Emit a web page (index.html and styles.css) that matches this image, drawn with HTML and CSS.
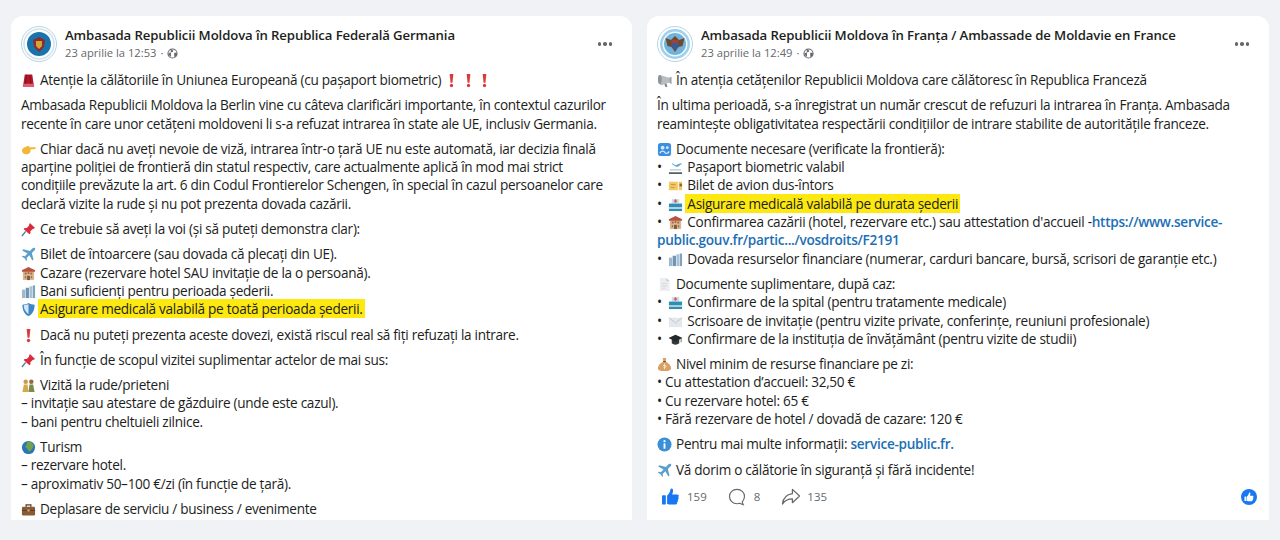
FILE: index.html
```html
<!DOCTYPE html>
<html lang="ro">
<head>
<meta charset="utf-8">
<title>Ambasade</title>
<link rel="stylesheet" href="styles.css">
</head>
<body>
<svg class="defs" aria-hidden="true">
  <symbol id="e-siren" viewBox="0 0 16 16"><path d="M4 1.500h8l1.500 10.500h-11z" fill="#b3162a"/><rect x="2" y="11.500" width="12" height="3.500" rx="1" fill="#d9606c"/><path d="M6 2 5 11.500M9.500 2l.8 9.500" stroke="#7c0c1b" stroke-width=".8"/></symbol>
  <symbol id="e-excl" viewBox="0 0 16 16"><path d="M6 1h4L9 10.500H7z" fill="#dd3a3a"/><circle cx="8" cy="13.300" r="1.800" fill="#dd3a3a"/></symbol>
  <symbol id="e-hand" viewBox="0 0 16 16"><path d="M1 9c0-2 2-3 4-4l3-1c1 0 1 1 .5 1.500L15 5.500c1.200.2 1.200 1.800 0 2L10 8l.3 1.500c0 1-.5 1.300-1 2-.8 1.500-2.500 1.500-4 1.500C3 13 1 11.500 1 9z" fill="#f2b736"/></symbol>
  <symbol id="e-pin" viewBox="0 0 16 16"><path d="M9.500 1 15 6.500l-1.600.8-1 .1-2.400 2.400.1 2.200-1.100 1.100L2.800 7.400 3.900 6.300l2.200.1 2.400-2.400.1-1z" fill="#d92b3a"/><path d="M5 10 1 15" stroke="#5a7d94" stroke-width="1.500"/></symbol>
  <symbol id="e-plane" viewBox="0 0 16 16"><path d="M15 1c-1.300-.4-2.500.2-3.500 1.200L9.500 4.200 2.500 2.500 1.300 3.700l5.600 3.200-2.700 2.900-2.300-.4-.9.900 2.900 1.600 1.600 2.900.9-.9-.4-2.300 2.900-2.700 3.200 5.600 1.200-1.200-1.700-7 2-2C14.800 3.500 15.400 2.300 15 1z" fill="#5c9fc9"/></symbol>
  <symbol id="e-hotel" viewBox="0 0 16 16"><rect x="2" y="4" width="12" height="11" fill="#dcb78e"/><path d="M1 4.500 8 1l7 3.500v1.500H1z" fill="#b9513f"/><rect x="6.500" y="10.500" width="3" height="4.500" fill="#7a5a3c"/><path d="M4 7h2v2H4zM10 7h2v2h-2zM4 11h1.500v2H4zM10.500 11H12v2h-1.500z" fill="#8d6f52"/><circle cx="8" cy="7.500" r="1.100" fill="#c94b4b"/></symbol>
  <symbol id="e-bank" viewBox="0 0 16 16"><path d="M1 6h3.500v9H1z" fill="#9db9cf"/><path d="M5 4h3.500v11H5z" fill="#6f94b3"/><path d="M9 2.500h3v12.500H9z" fill="#a9c2d6"/><path d="M12.500 1.500H15V15h-2.500z" fill="#7fa3bf"/></symbol>
  <symbol id="e-shield" viewBox="0 0 16 16"><path d="M8 1c2 1.200 4 1.600 6.500 1.800C14.500 9 12 13 8 15 4 13 1.500 9 1.500 2.800 4 2.600 6 2.200 8 1z" fill="#3f86c6"/><path d="M8 2.500 3 3.500C3 8 5 11 8 13z" fill="#d6e6f3"/></symbol>
  <symbol id="e-people" viewBox="0 0 16 16"><circle cx="5" cy="4" r="2.400" fill="#c99a4a"/><circle cx="11" cy="4" r="2.400" fill="#9a6b34"/><path d="M1.500 15l1.500-8h4l1 8z" fill="#d3a84f"/><path d="M8 15l1-8h4l1.500 8z" fill="#7d8a4a"/></symbol>
  <symbol id="e-globe" viewBox="0 0 16 16"><circle cx="8" cy="8" r="7" fill="#2b74b8"/><path d="M7 2c2-1 5 0 6 3 1 2 0 3-1 4-1 2-3 4-4 3-1-2-1-3-3-4-1-2 1-2 1-3s0-2 1-3z" fill="#6fa24a"/></symbol>
  <symbol id="e-case" viewBox="0 0 16 16"><path d="M5.500 5V3h5v2" fill="none" stroke="#5e3b22" stroke-width="1.400"/><rect x="1" y="5" width="14" height="9.500" rx="1.500" fill="#8a5a33"/><path d="M1 9h14" stroke="#5e3b22"/><rect x="6.800" y="8" width="2.400" height="2" fill="#d2b184"/></symbol>
  <symbol id="e-mega" viewBox="0 0 16 16"><path d="M1 5c0-1 1-3 2-3l10 3v5L5 13c-3 0-4-5-4-8z" fill="#b9bdc0"/><ellipse cx="3" cy="7" rx="2" ry="4.800" fill="#8f9498"/><path d="M13 5l2.500-1v8L13 10z" fill="#9aa0a4"/><path d="M8 12l1 3h2l-1-4z" fill="#7a7f83"/></symbol>
  <symbol id="e-control" viewBox="0 0 16 16"><rect x="1" y="1" width="14" height="14" rx="3" fill="#3b8fe0"/><circle cx="6" cy="6" r="2" fill="#d8eafa"/><circle cx="11" cy="6" r="1.500" fill="#d8eafa"/><path d="M3 12c1-3 5-3 6 0M8 11c2 2 4 1 5-1" stroke="#d8eafa" stroke-width="1.300" fill="none"/></symbol>
  <symbol id="e-depart" viewBox="0 0 16 16"><path d="M1 13h14v2H1z" fill="#53606b"/><path d="M2 10.500h12" stroke="#a9b3ba" stroke-width="1"/><path d="M4 3l4 2.500 5-2 2 .5-4 3-2 .5L5 5z" fill="#6aa9d4"/></symbol>
  <symbol id="e-ticket" viewBox="0 0 16 16"><rect x="1" y="4" width="14" height="9" fill="#f1c865"/><rect x="10.500" y="4" width="1" height="9" fill="#fff"/><path d="M3 7h5M3 10h4" stroke="#c7933a"/><rect x="12.300" y="6" width="2.700" height="3" fill="#8f6a25"/></symbol>
  <symbol id="e-hosp" viewBox="0 0 16 16"><path d="M4 2h8v5H4z" fill="#cfdfe9"/><path d="M7.300 2.500h1.400v3.500H7.300zM6.200 3.600h3.600V5H6.200z" fill="#d65757"/><rect x="1" y="7" width="14" height="8" fill="#2f8fb3"/><path d="M1 11h14v1.500H1z" fill="#dfeaf0"/></symbol>
  <symbol id="e-page" viewBox="0 0 16 16"><path d="M3 1h7l3.500 3.500V15H3z" fill="#eceef0"/><path d="M10 1v3.500h3.500z" fill="#c8ccd0"/><path d="M5 7h6M5 9.500h6M5 12h4" stroke="#d5d8db"/></symbol>
  <symbol id="e-mail" viewBox="0 0 16 16"><rect x="1" y="4" width="14" height="10" fill="#e4e8ec"/><path d="M1 4l7 5.500L15 4" fill="none" stroke="#bfc6cc"/></symbol>
  <symbol id="e-cap" viewBox="0 0 16 16"><path d="M4 8v4c2 2 6 2 8 0V8z" fill="#33383c"/><path d="M8 3 .5 6.500 8 10l7.500-3.500z" fill="#24282b"/><path d="M14 7v4" stroke="#6a6f73"/></symbol>
  <symbol id="e-bag" viewBox="0 0 16 16"><path d="M6 1h4L9 5c3 1 6 4 6 7 0 2-2 3-7 3s-7-1-7-3c0-3 3-6 6-7z" fill="#d9a066"/><path d="M6.500 4.800h3" stroke="#7c4f25" stroke-width="1.200"/><path d="M8 7v6M6.500 9h2.500c1 0 1 2 0 2H7" stroke="#f7e3c6" fill="none"/></symbol>
  <symbol id="e-info" viewBox="0 0 16 16"><circle cx="8" cy="8" r="7.500" fill="#3b8fd6"/><circle cx="8" cy="4.500" r="1.200" fill="#fff"/><rect x="7" y="6.800" width="2" height="5.700" fill="#fff"/></symbol>
  <symbol id="i-world" viewBox="0 0 12 12"><circle cx="6" cy="6" r="5" fill="#fff" stroke="#65686c" stroke-width="1.100"/><path d="M4 1.200c1 1 2.500.8 2.800 1.900S5 4.800 3.800 5 1.200 5.400 1.600 7 3.800 8 4.500 10.600zM7.800 5.300c1.500-.5 3.200 0 3.300 1S9.300 9.500 8 10.300z" fill="#65686c"/></symbol>
</svg>

<main class="page">
  <article class="card">
    <header class="head">
      <svg class="avatar" viewBox="0 0 36 36" aria-hidden="true"><circle cx="18" cy="18" r="17.500" fill="#fff" stroke="#b5d3e4"/><circle cx="18" cy="18" r="15" fill="none" stroke="#cfe3ef" stroke-width="1.500"/><circle cx="18" cy="18" r="12" fill="#1a74ac"/><path d="M12 14l6-3 6 3-1 7-5 5-5-5z" fill="#8a2c33"/><path d="M15 15h6v5l-3 3-3-3z" fill="#d6a52f"/></svg>
      <div class="meta">
        <div class="name">Ambasada Republicii Moldova în Republica Federală Germania</div>
        <div class="date"><span>23 aprilie la 12:53</span><span>·</span><svg class="world" aria-hidden="true"><use href="#i-world"/></svg></div>
      </div>
      <div class="dots"><i></i><i></i><i></i></div>
    </header>
    <div class="body">
      <p><svg class="emoji"><use href="#e-siren"/></svg>Atenție la călătoriile în Uniunea Europeană (cu pașaport biometric) <svg class="emoji excl"><use href="#e-excl"/></svg><svg class="emoji excl"><use href="#e-excl"/></svg><svg class="emoji excl"><use href="#e-excl"/></svg></p>
      <p>Ambasada Republicii Moldova la Berlin vine cu câteva clarificări importante, în contextul cazurilor<br>recente în care unor cetățeni moldoveni li s-a refuzat intrarea în state ale UE, inclusiv Germania.</p>
      <p><svg class="emoji"><use href="#e-hand"/></svg>Chiar dacă nu aveți nevoie de viză, intrarea într-o țară UE nu este automată, iar decizia finală<br>aparține poliției de frontieră din statul respectiv, care actualmente aplică în mod mai strict<br>condițiile prevăzute la art. 6 din Codul Frontierelor Schengen, în special în cazul persoanelor care<br>declară vizite la rude și nu pot prezenta dovada cazării.</p>
      <p><svg class="emoji"><use href="#e-pin"/></svg>Ce trebuie să aveți la voi (și să puteți demonstra clar):</p>
      <p><svg class="emoji"><use href="#e-plane"/></svg>Bilet de întoarcere (sau dovada că plecați din UE).<br><svg class="emoji"><use href="#e-hotel"/></svg>Cazare (rezervare hotel SAU invitație de la o persoană).<br><svg class="emoji"><use href="#e-bank"/></svg>Bani suficienți pentru perioada șederii.<br><svg class="emoji"><use href="#e-shield"/></svg><mark>Asigurare medicală valabilă pe toată perioada șederii.</mark></p>
      <p><svg class="emoji"><use href="#e-excl"/></svg>Dacă nu puteți prezenta aceste dovezi, există riscul real să fiți refuzați la intrare.</p>
      <p><svg class="emoji"><use href="#e-pin"/></svg>În funcție de scopul vizitei suplimentar actelor de mai sus:</p>
      <p><svg class="emoji"><use href="#e-people"/></svg>Vizită la rude/prieteni<br>– invitație sau atestare de găzduire (unde este cazul).<br>– bani pentru cheltuieli zilnice.</p>
      <p><svg class="emoji"><use href="#e-globe"/></svg>Turism<br>– rezervare hotel.<br>– aproximativ 50–100 €/zi (în funcție de țară).</p>
      <p><svg class="emoji"><use href="#e-case"/></svg>Deplasare de serviciu / business / evenimente</p>
    </div>
  </article>

  <article class="card">
    <header class="head">
      <svg class="avatar" viewBox="0 0 36 36" aria-hidden="true"><circle cx="18" cy="18" r="17.500" fill="#fff" stroke="#b5d3e4"/><circle cx="18" cy="18" r="15" fill="#9fd0ea"/><circle cx="18" cy="18" r="12.500" fill="#f4f8fb"/><circle cx="18" cy="18" r="11" fill="#6fb4dc"/><path d="M8.500 12 14 14l4-4 4 4 5.500-2-2 8-4 1-3.500 5-3.500-5-4-1z" fill="#6c4a2c"/><path d="M14.500 14h7v6l-3.500 4-3.500-4z" fill="#b13a36"/><path d="M14.500 17h7v3l-3.500 4-3.500-4z" fill="#2f5f9c"/></svg>
      <div class="meta">
        <div class="name">Ambasada Republicii Moldova în Franţa / Ambassade de Moldavie en France</div>
        <div class="date"><span>23 aprilie la 12:49</span><span>·</span><svg class="world" aria-hidden="true"><use href="#i-world"/></svg></div>
      </div>
      <div class="dots"><i></i><i></i><i></i></div>
    </header>
    <div class="body">
      <p><svg class="emoji"><use href="#e-mega"/></svg>În atenția cetățenilor Republicii Moldova care călătoresc în Republica Franceză</p>
      <p>În ultima perioadă, s-a înregistrat un număr crescut de refuzuri la intrarea în Franța. Ambasada<br>reamintește obligativitatea respectării condițiilor de intrare stabilite de autoritățile franceze.</p>
      <p><svg class="emoji"><use href="#e-control"/></svg>Documente necesare (verificate la frontieră):<br><span class="bul">•</span><svg class="emoji"><use href="#e-depart"/></svg>Pașaport biometric valabil<br><span class="bul">•</span><svg class="emoji"><use href="#e-ticket"/></svg>Bilet de avion dus-întors<br><span class="bul">•</span><svg class="emoji"><use href="#e-hosp"/></svg><mark>Asigurare medicală valabilă pe durata șederii</mark><br><span class="bul">•</span><svg class="emoji"><use href="#e-hotel"/></svg>Confirmarea cazării (hotel, rezervare etc.) sau attestation d'accueil -<a href="#">https://www.service-<br>public.gouv.fr/partic.../vosdroits/F2191</a><br><span class="bul">•</span><svg class="emoji"><use href="#e-bank"/></svg>Dovada resurselor financiare (numerar, carduri bancare, bursă, scrisori de garanție etc.)</p>
      <p><svg class="emoji"><use href="#e-page"/></svg>Documente suplimentare, după caz:<br><span class="bul">•</span><svg class="emoji"><use href="#e-hosp"/></svg>Confirmare de la spital (pentru tratamente medicale)<br><span class="bul">•</span><svg class="emoji"><use href="#e-mail"/></svg>Scrisoare de invitație (pentru vizite private, conferințe, reuniuni profesionale)<br><span class="bul">•</span><svg class="emoji"><use href="#e-cap"/></svg>Confirmare de la instituția de învățământ (pentru vizite de studii)</p>
      <p><svg class="emoji"><use href="#e-bag"/></svg>Nivel minim de resurse financiare pe zi:<br>• Cu attestation d’accueil: 32,50 €<br>• Cu rezervare hotel: 65 €<br>• Fără rezervare de hotel / dovadă de cazare: 120 €</p>
      <p><svg class="emoji"><use href="#e-info"/></svg>Pentru mai multe informații: <a href="#">service-public.fr.</a></p>
      <p><svg class="emoji"><use href="#e-plane"/></svg>Vă dorim o călătorie în siguranță și fără incidente!</p>
    </div>
    <footer class="foot">
      <div class="stat"><svg class="ico-like" viewBox="0 0 20 20" aria-hidden="true"><rect x="0" y="8.500" width="4.500" height="11" rx="1" fill="#1877f2"/><path d="M6 9c2-2 3.500-4 4-7.500C10.200.2 12.800 0 13 2.500c.2 2-.6 3.500-1 5h6c2 0 2.300 2.400 1 3 1 1 .8 2.700-.4 3.200.7 1.200.2 2.500-.9 3 .4 1.300-.4 2.800-2 2.800H9c-1.500 0-2.200-.5-3-1z" fill="#1877f2"/></svg><span>159</span></div>
      <div class="stat"><svg class="ico-com" viewBox="0 0 20 20" aria-hidden="true"><path d="M10 1.500c-4.700 0-8.300 3.500-8.300 8s3.600 8 8.300 8c1 0 2-.2 2.900-.5 1.300.7 2.600 1.200 4 1.500-.6-1-1-2.200-1-3.200 1.600-1.800 2.400-4 2.400-5.800 0-4.500-3.600-8-8.300-8z" fill="none" stroke="#65686c" stroke-width="1.300"/></svg><span>8</span></div>
      <div class="stat stat-share"><svg class="ico-share" viewBox="0 0 20 20" aria-hidden="true"><path d="M11.500 2.500 19 9.500l-7.500 7v-4C7 12.500 3.500 14 1 18c.5-5.500 4-10 10.500-11z" fill="none" stroke="#65686c" stroke-width="1.300" stroke-linejoin="round"/></svg><span>135</span></div>
      <svg class="badge" viewBox="0 0 16 16" aria-hidden="true"><circle cx="8" cy="8" r="8" fill="#1877f2"/><rect x="3.500" y="7.500" width="2" height="4.500" rx=".5" fill="#fff"/><path d="M6 7.500c1-.8 1.700-2 2-3.500.2-.8 1.500-.5 1.400.8L9 6.800h2.600c1 0 1.100 1.300.5 1.600.5.500.3 1.300-.2 1.500.2.600 0 1.200-.5 1.400.1.700-.3 1-1 1H7c-.5 0-.8-.2-1-.5z" fill="#fff"/></svg>
    </footer>
  </article>
</main>
</body>
</html>
```
FILE: styles.css
```css
* { box-sizing: border-box; }
html, body {
  margin: 0;
  height: 540px;
  overflow: hidden;
  background: #f0f2f5;
}
body {
  font-family: "Open Sans", "Noto Sans", sans-serif;
  color: #1c1e21;
  font-size: 13.6px;
  line-height: 18.3px;
}
.defs { width: 0; height: 0; position: absolute; }
.page {
  display: flex;
  gap: 15px;
  padding: 16px 11px 0;
}
.card {
  width: 621px;
  height: 504px;
  background: #fff;
  border-radius: 12px 12px 0 0;
  overflow: hidden;
  display: flex;
  flex-direction: column;
  flex: none;
}
.card + .card { width: 622px; }
.head {
  display: flex;
  align-items: flex-start;
  padding: 10px 12px 0 10px;
  height: 55px;
  flex: none;
}
.avatar {
  width: 36px;
  height: 36px;
  margin-right: 8px;
  flex: none;
}
.meta { flex: 1; }
.name {
  font-weight: 600;
  font-size: 13.2px;
  line-height: 18px;
  white-space: nowrap;
  letter-spacing: -.12px;
}
.date {
  display: flex;
  align-items: center;
  gap: 4px;
  color: #65686c;
  font-size: 11.2px;
  line-height: 18px;
}
.world { width: 11px; height: 11px; }
.dots {
  display: flex;
  gap: 2px;
  margin: 16px 8px 0 0;
}
.dots i {
  width: 3.500px;
  height: 3.500px;
  border-radius: 50%;
  background: #65686c;
}
.body {
  padding: 0 10px;
  white-space: nowrap;
  letter-spacing: -.29px;
  flex: none;
}
.body p { margin: 0 0 7px; }
.emoji {
  width: 15px;
  height: 15px;
  margin-right: 4px;
  vertical-align: -3px;
}
.emoji.excl { margin-right: 1.500px; }
.bul { margin-right: 6.500px; }
mark {
  background: #fde910;
  color: inherit;
  margin-left: -2px;
  padding: 0 2px;
}
a { color: #1b6fb5; text-decoration: none; font-weight: 600; }
.foot {
  display: flex;
  align-items: center;
  padding: 0 12px 0 15px;
  margin-top: -1px;
  height: 24px;
  color: #65686c;
  font-size: 11.5px;
}
.stat { display: flex; align-items: center; gap: 8px; margin-right: 21px; }
.stat-share { gap: 6px; }
.ico-like { width: 17px; height: 19px; }
.ico-com { width: 18px; height: 18px; }
.ico-share { width: 20px; height: 19px; }
.badge { width: 16px; height: 16px; margin-left: auto; }
```
